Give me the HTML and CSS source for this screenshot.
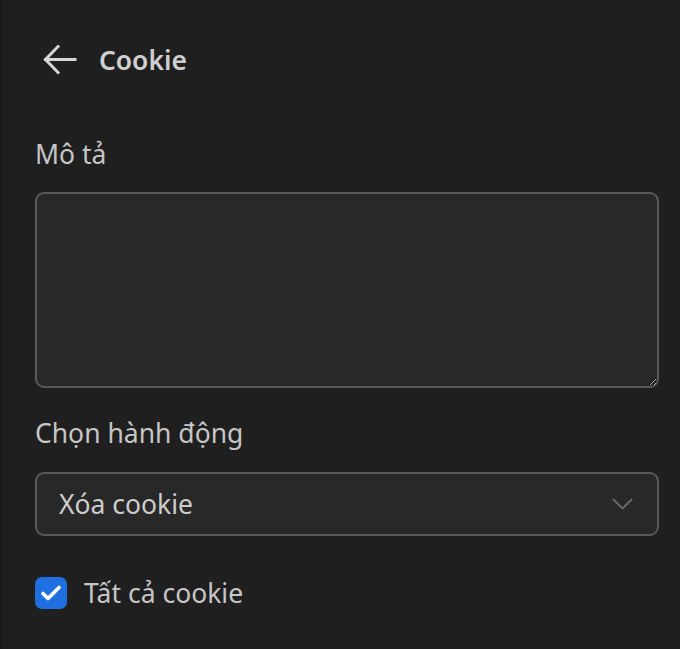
FILE: index.html
```html
<!DOCTYPE html>
<html lang="vi">
<head>
<meta charset="utf-8">
<link rel="stylesheet" href="styles.css">
</head>
<body>
<div class="panel">
  <header class="header">
    <button class="back" aria-label="Quay lại">
      <svg width="36" height="36" viewBox="0 0 36 36" fill="none" stroke="#d6d6d6" stroke-width="3" stroke-linecap="square">
        <path d="M3.5 17.5H33"/>
        <path d="M16 4.5L3.5 17.5L16 30.5"/>
      </svg>
    </button>
    <h1 class="title">Cookie</h1>
  </header>

  <label class="label" for="desc">Mô tả</label>
  <textarea id="desc" class="textarea"></textarea>

  <label class="label label-action">Chọn hành động</label>
  <div class="select">
    <span class="select-value">Xóa cookie</span>
    <svg class="chevron" width="21" height="12" viewBox="0 0 21 12" fill="none" stroke="#6a6a6a" stroke-width="1.8">
      <path d="M1 1L10.5 10.5L20 1"/>
    </svg>
  </div>

  <label class="check">
    <span class="box">
      <svg width="22" height="18" viewBox="0 0 22 18" fill="none" stroke="#ffffff" stroke-width="3.6" stroke-linecap="round" stroke-linejoin="round">
        <path d="M3 9.5L8 14.5L19 3.5"/>
      </svg>
    </span>
    <span class="check-text">Tất cả cookie</span>
  </label>
</div>
</body>
</html>
```

FILE: styles.css
```css
* { box-sizing: border-box; }
html, body {
  margin: 0;
  height: 100%;
  background: #1f1f1f;
}
body {
  font-family: "Noto Sans", "Open Sans", sans-serif;
  color: #cccccc;
  border-left: 3px solid #1a1a1a;
}
.panel {
  padding: 38px 21px 0 32px;
  display: flex;
  flex-direction: column;
}
.header {
  display: flex;
  align-items: center;
  gap: 21px;
  height: 44px;
}
.back {
  background: none;
  border: 0;
  padding: 0;
  margin-left: 7px;
  width: 36px;
  height: 36px;
  display: flex;
}
.title {
  margin: 0;
  font-size: 26.4px;
  font-weight: 600;
  color: #cfcfcf;
  line-height: 1;
}
.label {
  font-size: 26.5px;
  color: #c6c6c6;
  line-height: 32px;
  margin-top: 56px;
  margin-bottom: 22px;
}
.label-action {
  margin-top: 29px;
  margin-bottom: 23px;
}
.textarea {
  display: block;
  width: 624px;
  height: 196px;
  background: #282828;
  border: 2px solid #595959;
  border-radius: 9px;
  resize: vertical;
  color: #ccc;
  font: inherit;
  padding: 10px 22px;
  outline: none;
}
.select {
  width: 624px;
  height: 64px;
  background: #282828;
  border: 2px solid #595959;
  border-radius: 9px;
  display: flex;
  align-items: center;
  justify-content: space-between;
  padding: 0 24px 0 22px;
}
.select-value {
  font-size: 26.5px;
  line-height: 32px;
  color: #cccccc;
}
.check {
  display: flex;
  align-items: center;
  gap: 17px;
  margin-top: 41px;
}
.box {
  width: 32px;
  height: 32px;
  border-radius: 7px;
  background: #1f6fe0;
  display: flex;
  align-items: center;
  justify-content: center;
}
.check-text {
  font-size: 26.5px;
  line-height: 32px;
  color: #c6c6c6;
}
```
